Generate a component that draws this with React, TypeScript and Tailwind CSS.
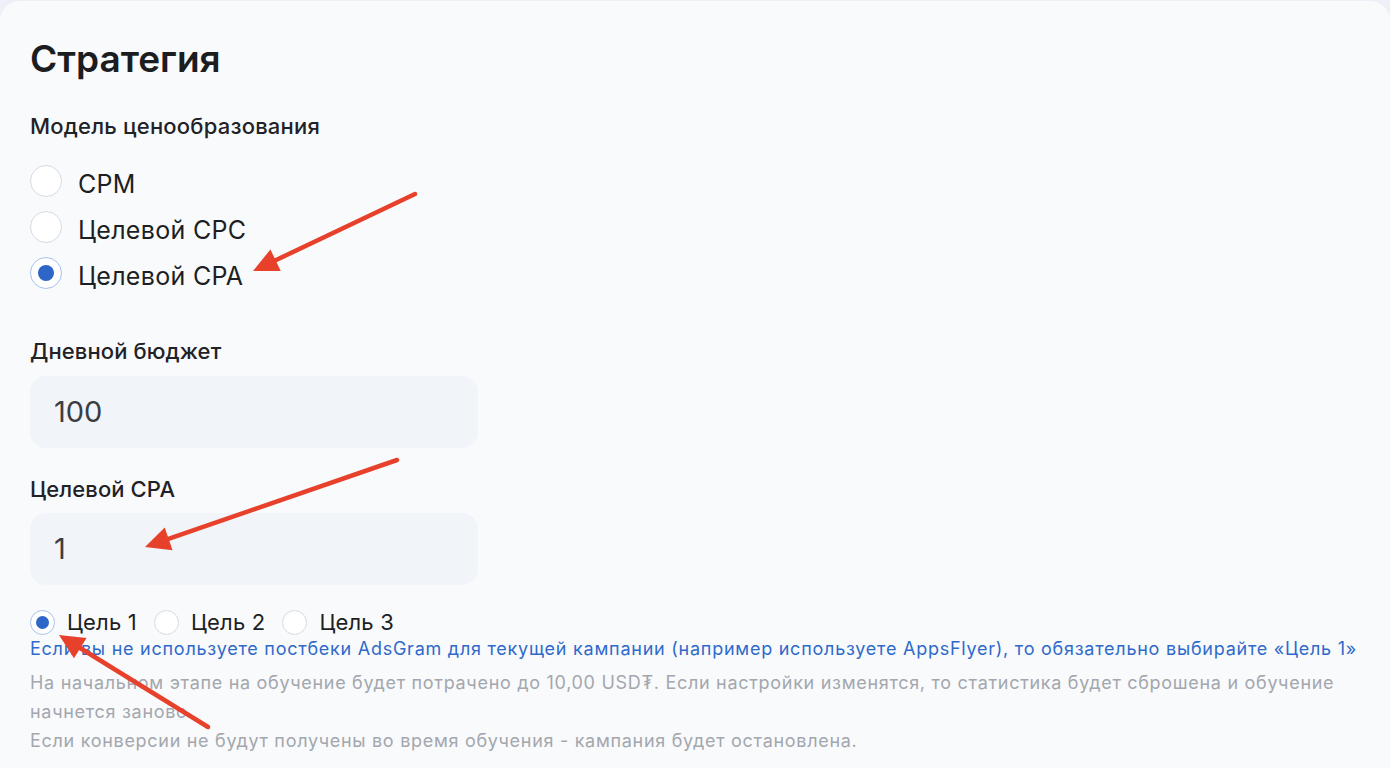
import React from "react";

type Pt = [number, number];

function Arrow({ from, to }: { from: Pt; to: Pt }) {
  const dx = to[0] - from[0];
  const dy = to[1] - from[1];
  const len = Math.hypot(dx, dy);
  const ux = dx / len;
  const uy = dy / len;
  const headLen = 25;
  const half = 12;
  const bx = to[0] - ux * headLen;
  const by = to[1] - uy * headLen;
  const px = -uy;
  const py = ux;
  const pts = `${to[0]},${to[1]} ${bx + px * half},${by + py * half} ${bx - px * half},${by - py * half}`;
  return (
    <g>
      <line
        x1={from[0]}
        y1={from[1]}
        x2={bx + ux * 4}
        y2={by + uy * 4}
        stroke="#e8412b"
        strokeWidth={4.5}
        strokeLinecap="round"
      />
      <polygon points={pts} fill="#e8412b" />
    </g>
  );
}

function Radio({ checked, size }: { checked?: boolean; size: "lg" | "sm" }) {
  const box = size === "lg" ? "w-8 h-8" : "w-[25px] h-[25px]";
  const dot = size === "lg" ? "w-[16px] h-[16px]" : "w-[13px] h-[13px]";
  return (
    <span
      className={`${box} shrink-0 rounded-full bg-white border flex items-center justify-center ${
        checked ? "border-[#a8c2ec]" : "border-[#d5dbe5]"
      }`}
    >
      {checked && <span className={`${dot} rounded-full bg-[#2e66c7]`} />}
    </span>
  );
}

export default function App() {
  const models = [
    { label: "CPM", checked: false },
    { label: "Целевой CPC", checked: false },
    { label: "Целевой CPA", checked: true },
  ];
  const goals = [
    { label: "Цель 1", checked: true },
    { label: "Цель 2", checked: false },
    { label: "Цель 3", checked: false },
  ];

  return (
    <div
      className="relative w-[1390px] h-[768px] overflow-hidden bg-[#edf1f7] pt-px"
      style={{ fontFamily: "Inter, 'Noto Sans', sans-serif" }}
    >
      <div className="h-[767px] w-[1390px] rounded-t-[20px] bg-[#f9fafc] pl-[30px] pr-[20px] pt-[36px]">
        <h1 className="text-[37px] leading-[44px] font-semibold text-[#1b1d20]">Стратегия</h1>

        <div className="mt-[31px] text-[22px] leading-[28px] font-medium tracking-[0.2px] text-[#1f2226]">
          Модель ценообразования
        </div>

        <div className="mt-[25px] flex flex-col gap-[14px]">
          {models.map((m) => (
            <label key={m.label} className="flex h-8 items-center gap-4">
              <Radio checked={m.checked} size="lg" />
              <span className="pt-[6px] text-[25px] leading-[32px] tracking-[0.3px] text-[#1d1f23]">
                {m.label}
              </span>
            </label>
          ))}
        </div>

        <div className="mt-[48px] text-[22px] leading-[28px] font-medium tracking-[0.1px] text-[#1f2226]">
          Дневной бюджет
        </div>
        <div className="mt-[11px] flex h-[72px] w-[448px] items-center rounded-[16px] bg-[#f1f4f9] pl-[24px] text-[29px] text-[#3a3d42]">
          100
        </div>

        <div className="mt-[27px] text-[22px] leading-[28px] font-medium tracking-[0.1px] text-[#1f2226]">
          Целевой CPA
        </div>
        <div className="mt-[10px] flex h-[72px] w-[448px] items-center rounded-[16px] bg-[#f1f4f9] pl-[24px] text-[29px] text-[#3a3d42]">
          1
        </div>

        <div className="mt-[24px] flex h-[26px] items-center">
          {goals.map((g) => (
            <label key={g.label} className="mr-[17px] flex items-center gap-[12px]">
              <Radio checked={g.checked} size="sm" />
              <span className="text-[22px] leading-[26px] tracking-[0.2px] text-[#1d1f23]">{g.label}</span>
            </label>
          ))}
        </div>

        <p className="mt-[2px] whitespace-nowrap text-[18px] leading-[24px] tracking-[0.75px] text-[#2f6acb]">
          Если вы не используете постбеки AdsGram для текущей кампании (например используете AppsFlyer), то
          обязательно выбирайте «Цель 1»
        </p>
        <div className="mt-[7px] text-[18px] leading-[29px] tracking-[0.7px] text-[#a3a7ae]">
          <p className="max-w-[1320px]">
            На начальном этапе на обучение будет потрачено до 10,00 USD₮. Если настройки изменятся, то статистика
            будет сброшена и обучение начнется заново
          </p>
          <p>Если конверсии не будут получены во время обучения - кампания будет остановлена.</p>
        </div>
      </div>

      <svg className="pointer-events-none absolute inset-0" width={1390} height={768} viewBox="0 0 1390 768">
        <Arrow from={[415, 194]} to={[253, 271]} />
        <Arrow from={[397, 460]} to={[145, 547]} />
        <Arrow from={[208, 727]} to={[59, 635]} />
      </svg>
    </div>
  );
}
